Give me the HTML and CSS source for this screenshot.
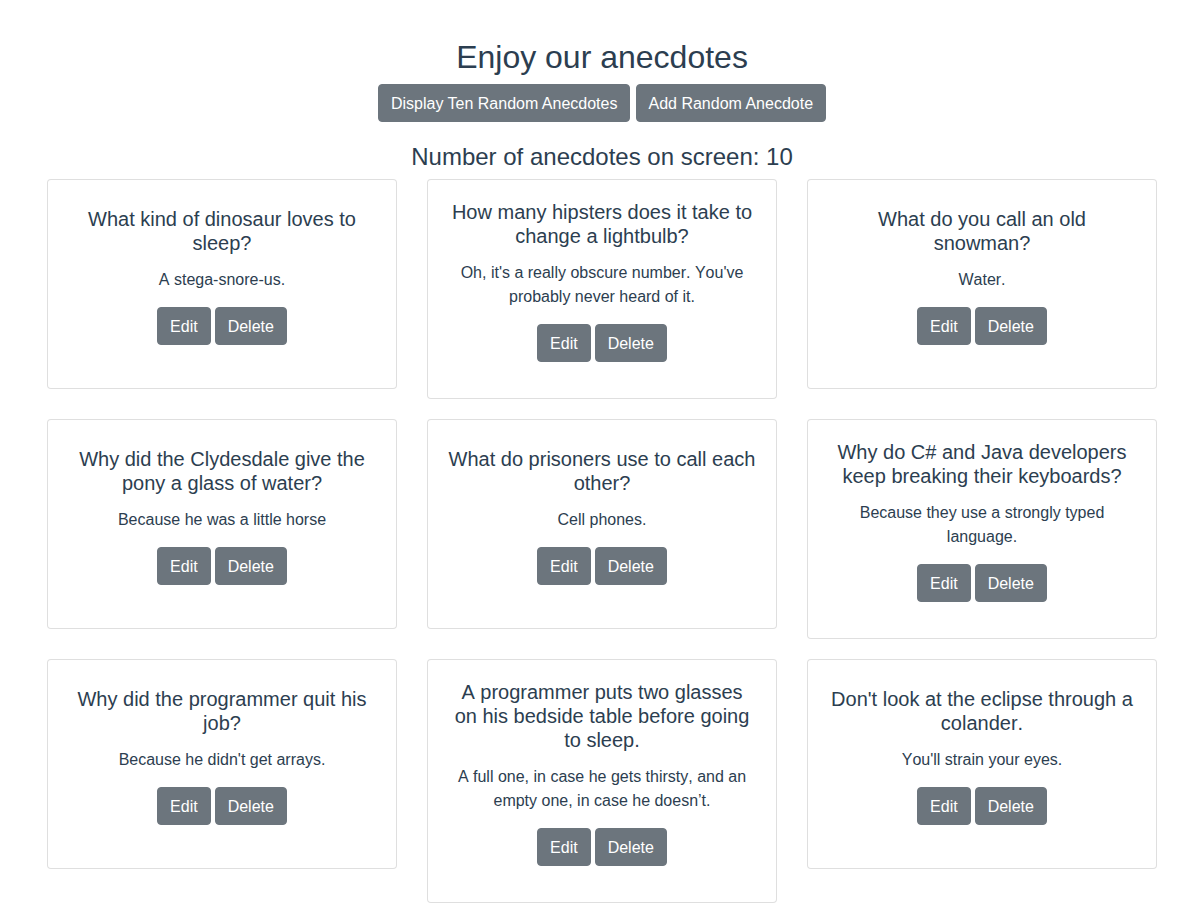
FILE: index.html
```html
<!DOCTYPE html>
<html lang="en">
<head>
<meta charset="utf-8">
<title>Enjoy our anecdotes</title>
<link rel="stylesheet" href="styles.css">
</head>
<body>
<div class="app">
  <h1 class="page-title">Enjoy our anecdotes</h1>
  <div class="toolbar">
    <button class="btn btn-wide">Display Ten Random Anecdotes</button>
    <button class="btn btn-wide">Add Random Anecdote</button>
  </div>
  <h2 class="count">Number of anecdotes on screen: 10</h2>
  <div class="grid">
    <div class="card"><div class="card-body">
      <h5 class="card-title">What kind of dinosaur loves to sleep?</h5>
      <p class="card-text">A stega-snore-us.</p>
      <div class="actions"><button class="btn">Edit</button><button class="btn">Delete</button></div>
    </div></div>
    <div class="card"><div class="card-body">
      <h5 class="card-title">How many hipsters does it take to change a lightbulb?</h5>
      <p class="card-text">Oh, it's a really obscure number. You've probably never heard of it.</p>
      <div class="actions"><button class="btn">Edit</button><button class="btn">Delete</button></div>
    </div></div>
    <div class="card"><div class="card-body">
      <h5 class="card-title">What do you call an old snowman?</h5>
      <p class="card-text">Water.</p>
      <div class="actions"><button class="btn">Edit</button><button class="btn">Delete</button></div>
    </div></div>
    <div class="card"><div class="card-body">
      <h5 class="card-title">Why did the Clydesdale give the pony a glass of water?</h5>
      <p class="card-text">Because he was a little horse</p>
      <div class="actions"><button class="btn">Edit</button><button class="btn">Delete</button></div>
    </div></div>
    <div class="card"><div class="card-body">
      <h5 class="card-title">What do prisoners use to call each other?</h5>
      <p class="card-text">Cell phones.</p>
      <div class="actions"><button class="btn">Edit</button><button class="btn">Delete</button></div>
    </div></div>
    <div class="card"><div class="card-body">
      <h5 class="card-title">Why do C# and Java developers keep breaking their keyboards?</h5>
      <p class="card-text">Because they use a strongly typed language.</p>
      <div class="actions"><button class="btn">Edit</button><button class="btn">Delete</button></div>
    </div></div>
    <div class="card"><div class="card-body">
      <h5 class="card-title">Why did the programmer quit his job?</h5>
      <p class="card-text">Because he didn't get arrays.</p>
      <div class="actions"><button class="btn">Edit</button><button class="btn">Delete</button></div>
    </div></div>
    <div class="card"><div class="card-body">
      <h5 class="card-title">A programmer puts two glasses on his bedside table before going to sleep.</h5>
      <p class="card-text">A full one, in case he gets thirsty, and an empty one, in case he doesn’t.</p>
      <div class="actions"><button class="btn">Edit</button><button class="btn">Delete</button></div>
    </div></div>
    <div class="card"><div class="card-body">
      <h5 class="card-title">Don't look at the eclipse through a colander.</h5>
      <p class="card-text">You'll strain your eyes.</p>
      <div class="actions"><button class="btn">Edit</button><button class="btn">Delete</button></div>
    </div></div>
  </div>
</div>
</body>
</html>
```
FILE: styles.css
```css
* {
  box-sizing: border-box;
}

html, body {
  margin: 0;
  background: #ffffff;
}

body {
  font-family: "Liberation Sans", Arial, Helvetica, sans-serif;
  font-size: 16px;
  line-height: 1.5;
  color: #2c3e50;
  font-kerning: none;
}

.app {
  padding: 38px 0 0 8px;
  text-align: center;
}

.page-title {
  margin: 0 0 8px;
  font-size: 32px;
  line-height: 38.4px;
  font-weight: 400;
}

.toolbar {
  display: flex;
  justify-content: center;
  gap: 6px;
  margin-bottom: 20px;
}

.count {
  margin: 0 0 8px;
  padding-top: 1px;
  font-size: 24px;
  line-height: 28px;
  font-weight: 400;
}

.btn {
  display: inline-block;
  font-family: inherit;
  font-size: 16px;
  line-height: 24px;
  padding: 7px 12px 5px;
  color: #ffffff;
  background: #6c757d;
  border: 1px solid #6c757d;
  border-radius: 4px;
  cursor: pointer;
  font-kerning: none;
}

.btn-wide {
  font-kerning: normal;
  padding-left: 11.5px;
  padding-right: 11.5px;
}

.grid {
  display: grid;
  grid-template-columns: repeat(3, 350px);
  justify-content: center;
  align-items: start;
  column-gap: 30px;
  row-gap: 20px;
}

.card {
  min-height: 210px;
  display: flex;
  flex-direction: column;
  justify-content: center;
  background: #ffffff;
  border: 1px solid rgba(0, 0, 0, 0.125);
  border-radius: 4px;
}

.card-body {
  padding: 20px;
}

.card-title {
  margin: 0 0 12px;
  font-size: 20px;
  line-height: 24px;
  font-weight: 400;
}

.card-text {
  margin: 0 0 15px;
  padding-top: 1px;
  line-height: 24px;
}

.actions {
  display: flex;
  justify-content: center;
  gap: 4px;
  margin-bottom: 16px;
}
```
